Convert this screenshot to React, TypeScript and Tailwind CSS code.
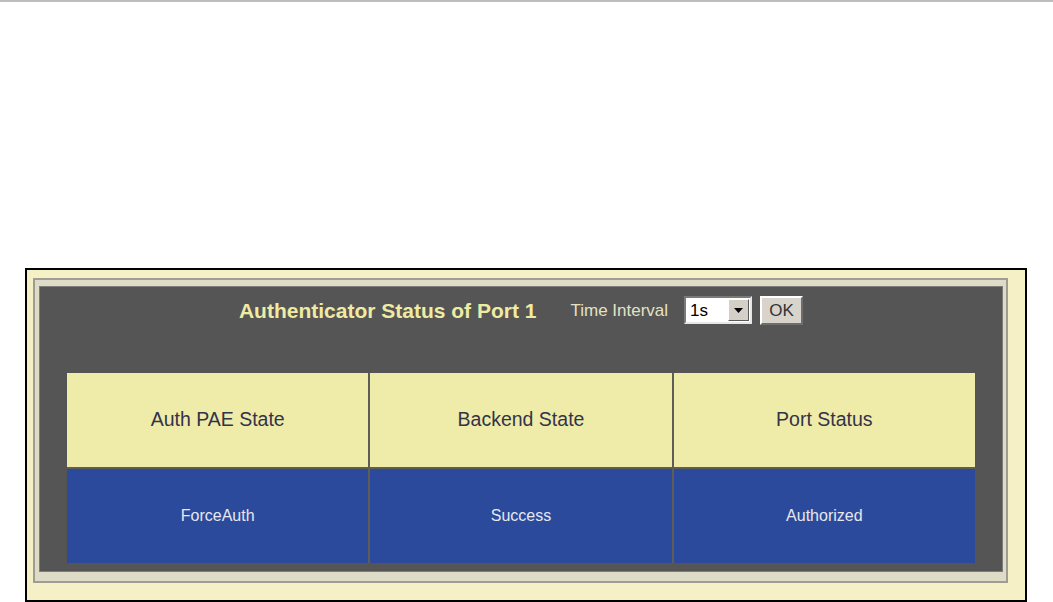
import React from 'react';

const font = { fontFamily: '"Liberation Sans", Arial, sans-serif' };

function SelectBox() {
  return (
    <div className="flex h-[28px] w-[68px] items-center border-2 border-t-[#7a7a7a] border-l-[#7a7a7a] border-r-[#e6e6e6] border-b-[#e6e6e6] bg-white">
      <span className="flex-1 pl-[4px] text-[17px] leading-none text-black">1s</span>
      <div className="mr-[1px] flex h-[22px] w-[21px] items-center justify-center border border-t-white border-l-white border-r-[#5a5a5a] border-b-[#5a5a5a] bg-[#d4d0c8]">
        <svg width="9" height="5" viewBox="0 0 9 5">
          <path d="M0 0h9L4.5 5z" fill="#000" />
        </svg>
      </div>
    </div>
  );
}

export default function App() {
  return (
    <div className="h-[602px] w-[1053px] overflow-hidden border-t-2 border-[#bdbdbd] bg-white" style={font}>
      <div className="ml-[25px] mt-[266px] h-[334px] w-[1002px] border-2 border-black bg-[#f5f0c6] pt-[8px] pl-[6px] pr-[17px] pb-[17px]">
        {/* bevelled frame */}
        <div className="h-full border-2 border-[#9e9d94] bg-[#dedcc6] pt-[6px] pl-[4px] pr-[3px] pb-[9px]">
          <div className="flex h-full flex-col border border-[#7c7c78] bg-[#555555] px-[27px] pt-[8px] pb-[6px]">
            {/* title row */}
            <div className="flex h-[30px] items-center justify-center">
              <span className="text-[21px] font-bold leading-none text-[#efeba2]">Authenticator Status of Port 1</span>
              <span className="ml-[34px] text-[17px] leading-none text-[#e4e2c4]">Time Interval</span>
              <div className="ml-[16px]">
                <SelectBox />
              </div>
              <button className="ml-[8px] h-[29px] w-[43px] border-2 border-t-white border-l-white border-r-[#6e6e6e] border-b-[#6e6e6e] bg-[#d8d4cc] text-[17px] leading-none text-[#333]">
                OK
              </button>
            </div>

            {/* status table */}
            <div className="mt-[48px] grid grid-cols-3 grid-rows-[94px_94px] gap-[2px] bg-[#5e5d58]">
              <div className="flex items-center justify-center bg-[#efeba8] text-[19.5px] text-[#33334a]">Auth PAE State</div>
              <div className="flex items-center justify-center bg-[#efeba8] text-[19.5px] text-[#33334a]">Backend State</div>
              <div className="flex items-center justify-center bg-[#efeba8] text-[19.5px] text-[#33334a]">Port Status</div>
              <div className="flex items-center justify-center bg-[#2b4a9b] text-[16px] text-[#e6e8ee]">ForceAuth</div>
              <div className="flex items-center justify-center bg-[#2b4a9b] text-[16px] text-[#e6e8ee]">Success</div>
              <div className="flex items-center justify-center bg-[#2b4a9b] text-[16px] text-[#e6e8ee]">Authorized</div>
            </div>
          </div>
        </div>
      </div>
    </div>
  );
}
